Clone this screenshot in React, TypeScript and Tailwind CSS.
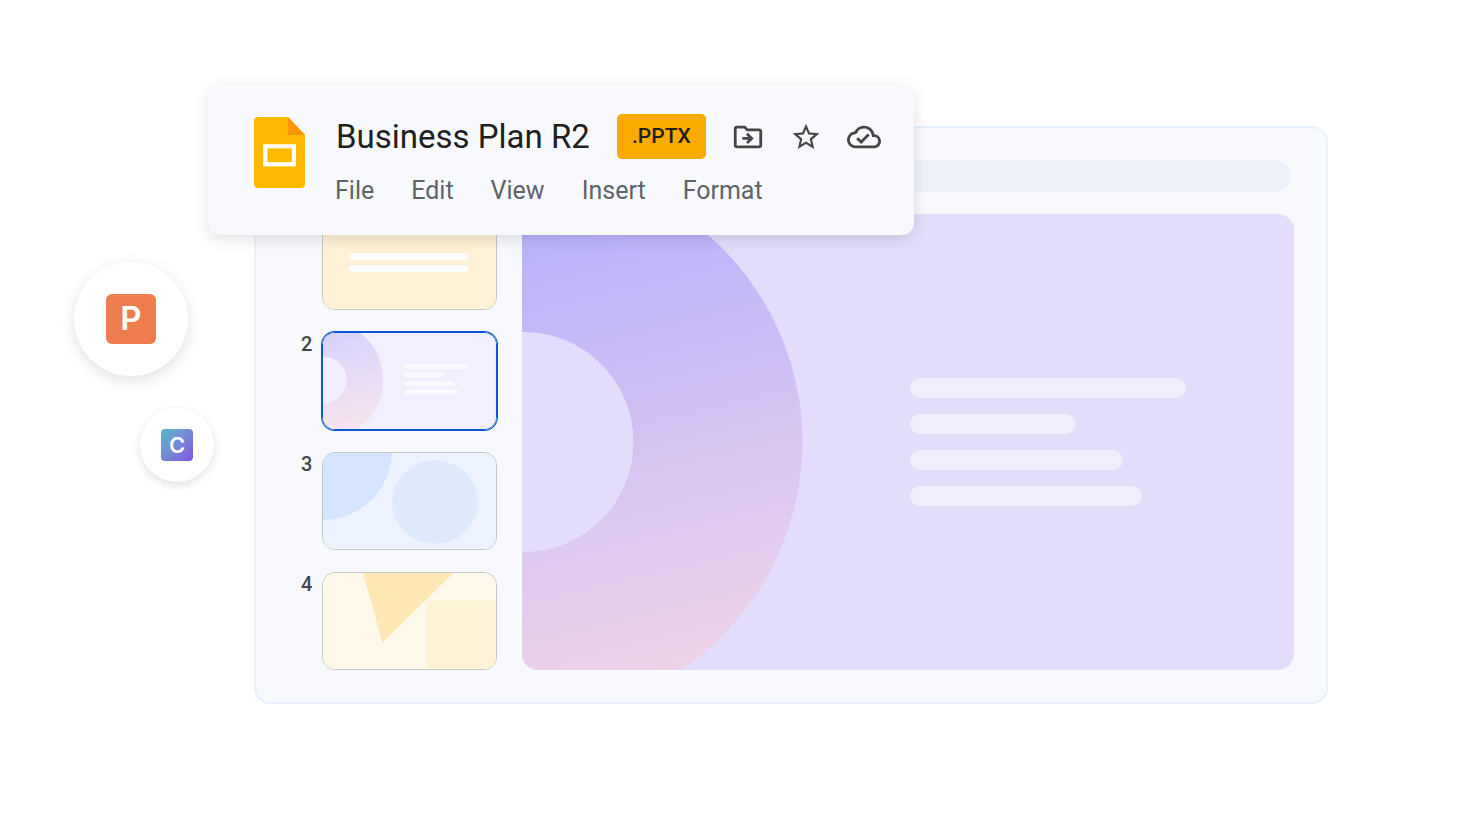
import type { ReactNode } from "react";
import { MdOutlineCloudDone, MdStarOutline } from "react-icons/md";

const MENUS = ["File", "Edit", "View", "Insert", "Format"];

function SlidesLogo() {
  return (
    <svg className="mt-[3px] h-[71px] w-[51px] shrink-0" viewBox="0 0 51 71" aria-hidden="true">
      <path d="M4 0H34L51 18V67a4 4 0 0 1-4 4H4a4 4 0 0 1-4-4V4a4 4 0 0 1 4-4Z" fill="#ffba00" />
      <path d="M34 0L51 18H34Z" fill="#ff9500" />
      <rect x="11.3" y="29.3" width="28.6" height="18" fill="none" stroke="#fff" strokeWidth="4.2" />
    </svg>
  );
}

function MoveIcon() {
  return (
    <svg className="size-[34px]" viewBox="0 -960 960 960" fill="currentColor" aria-hidden="true">
      <path d="m488-400-64 64 56 56 160-160-160-160-56 56 64 64H320v80h168ZM160-160q-33 0-56.5-23.5T80-240v-480q0-33 23.5-56.5T160-800h240l80 80h320q33 0 56.5 23.5T880-640v400q0 33-23.5 56.5T800-160H160Zm0-80h640v-400H447l-80-80H160v480Z" />
    </svg>
  );
}

function TitleCard() {
  return (
    <header className="absolute -top-[44px] -left-[48px] flex gap-[29px] rounded-xl bg-[#f8f9fd] pt-[30px] pr-[33px] pb-[28px] pl-[46px] shadow-[0_4px_16px_rgba(0,0,0,0.12)]">
      <SlidesLogo />
      <div className="flex flex-col gap-4">
        <div className="flex items-center gap-[25px] text-[#444746]">
          <h1 className="px-[2px] text-[33px] leading-[45px] whitespace-nowrap text-[#1f1f1f]">Business Plan R2</h1>
          <span className="flex h-[45px] w-[89px] items-center justify-center rounded-[5px] bg-[#f9ab00] text-[21px] font-medium text-[#1f1f1f]">
            .PPTX
          </span>
          <button type="button" aria-label="Move">
            <MoveIcon />
          </button>
          <button type="button" aria-label="Star">
            <MdStarOutline className="size-[32px]" />
          </button>
          <button type="button" aria-label="Saved to cloud">
            <MdOutlineCloudDone className="size-[34px]" />
          </button>
        </div>
        <nav className="flex gap-[37px] pl-px text-[25px] leading-8 text-[#5f6368]">
          {MENUS.map((menu) => (
            <button key={menu} type="button">
              {menu}
            </button>
          ))}
        </nav>
      </div>
    </header>
  );
}

function Thumbnail({ label, selected, children }: { label: number; selected?: boolean; children: ReactNode }) {
  return (
    <li className="flex">
      <span className="w-[21px] text-[20px] leading-6 font-medium text-[#444746]">{label}</span>
      <button
        type="button"
        aria-label={`Slide ${label}`}
        className={
          selected
            ? "h-[98px] w-[175px] overflow-hidden rounded-[13px] border border-[#0b57d0] ring-1 ring-[#0b57d0]"
            : "h-[98px] w-[175px] overflow-hidden rounded-[13px] border border-[#c4c7c5]"
        }
      >
        <svg className="block h-full w-full" viewBox="0 0 173 96" aria-hidden="true">
          {children}
        </svg>
      </button>
    </li>
  );
}

function ThumbnailList() {
  return (
    <ol className="flex shrink-0 flex-col gap-[22px]">
      <Thumbnail label={1}>
        <rect width="173" height="96" fill="#fff2d6" />
        <rect x="26" y="40" width="119" height="7" rx="3.5" fill="#fff" />
        <rect x="26" y="52" width="119" height="7" rx="3.5" fill="#fff" />
      </Thumbnail>
      <Thumbnail label={2} selected>
        <defs>
          <linearGradient id="thumbRing" gradientUnits="userSpaceOnUse" x1="10" y1="0" x2="30" y2="96">
            <stop offset="0" stopColor="#d7d3fe" />
            <stop offset="1" stopColor="#f8e4ee" />
          </linearGradient>
        </defs>
        <rect width="173" height="96" fill="#f2effe" />
        <circle cx="0" cy="47" r="60" fill="url(#thumbRing)" />
        <circle cx="0" cy="47" r="23.5" fill="#f2effe" />
        <g fill="#fbfaff">
          <rect x="81" y="31" width="64.5" height="5" rx="2.5" />
          <rect x="81" y="39.5" width="39" height="4.5" rx="2.2" />
          <rect x="81" y="48" width="50" height="4.5" rx="2.2" />
          <rect x="81" y="56.5" width="54.5" height="4.5" rx="2.2" />
        </g>
      </Thumbnail>
      <Thumbnail label={3}>
        <rect width="173" height="96" fill="#eef4ff" />
        <circle cx="0" cy="-2" r="69" fill="#d6e5ff" />
        <ellipse cx="112" cy="49" rx="43" ry="42" fill="#dfeafd" />
      </Thumbnail>
      <Thumbnail label={4}>
        <rect width="173" height="96" fill="#fff9eb" />
        <rect x="103" y="28" width="70" height="68" fill="#fff2d6" />
        <path d="M40 0H130L59.500 70Z" fill="#ffe8b5" />
      </Thumbnail>
    </ol>
  );
}

function SlideCanvas() {
  return (
    <section className="relative mt-[2px] flex flex-1 items-center justify-end overflow-hidden rounded-2xl bg-[#e3dcfb] pr-[108px]">
      <svg className="absolute inset-y-0 left-0 h-full" viewBox="0 0 284 456" aria-hidden="true">
        <defs>
          <linearGradient id="ring" gradientUnits="userSpaceOnUse" x1="42" y1="8" x2="150" y2="456">
            <stop offset="0" stopColor="#b9b2fc" />
            <stop offset="1" stopColor="#eed2e8" />
          </linearGradient>
        </defs>
        <ellipse cx="1.500" cy="228" rx="279" ry="276" fill="url(#ring)" />
        <circle cx="1.500" cy="228" r="110" fill="#e3dcfb" />
      </svg>
      <div className="flex w-[276px] flex-col gap-4">
        <div className="h-5 w-full rounded-full bg-[#f0edfd]" />
        <div className="h-5 w-[166px] rounded-full bg-[#f0edfd]" />
        <div className="h-5 w-[213px] rounded-full bg-[#f0edfd]" />
        <div className="h-5 w-[232px] rounded-full bg-[#f0edfd]" />
      </div>
    </section>
  );
}

export default function App() {
  return (
    <main className="flex min-h-screen items-start bg-white font-[Roboto,sans-serif]">
      <aside className="flex w-[254px] shrink-0 flex-col gap-8 pt-[262px] pl-[74px]">
        <div className="flex size-[114px] items-center justify-center rounded-full bg-white shadow-[0_4px_16px_rgba(0,0,0,0.12)]">
          <span className="flex size-[50px] items-center justify-center rounded-[6px] bg-[#ed7d4f] font-[Inter,sans-serif] text-[33px] font-semibold text-white">
            P
          </span>
        </div>
        <div className="ml-[66px] flex size-[74px] items-center justify-center rounded-full bg-white shadow-[0_3px_10px_rgba(0,0,0,0.12)]">
          <span className="flex size-8 items-center justify-center rounded-[4px] bg-linear-to-br from-[#54b8cb] to-[#8150dc] font-[Inter,sans-serif] text-[22px] font-semibold text-white">
            C
          </span>
        </div>
      </aside>
      <div className="relative mt-[126px] mr-[144px] flex-1 rounded-2xl border-2 border-[#e8f0fe] bg-[#f8f9fd] pt-8 pr-8 pb-8 pl-[45px]">
        <div className="mr-[3px] mb-5 h-8 rounded-full bg-[#edf2fa]" />
        <div className="flex gap-[25px]">
          <ThumbnailList />
          <SlideCanvas />
        </div>
        <TitleCard />
      </div>
    </main>
  );
}
